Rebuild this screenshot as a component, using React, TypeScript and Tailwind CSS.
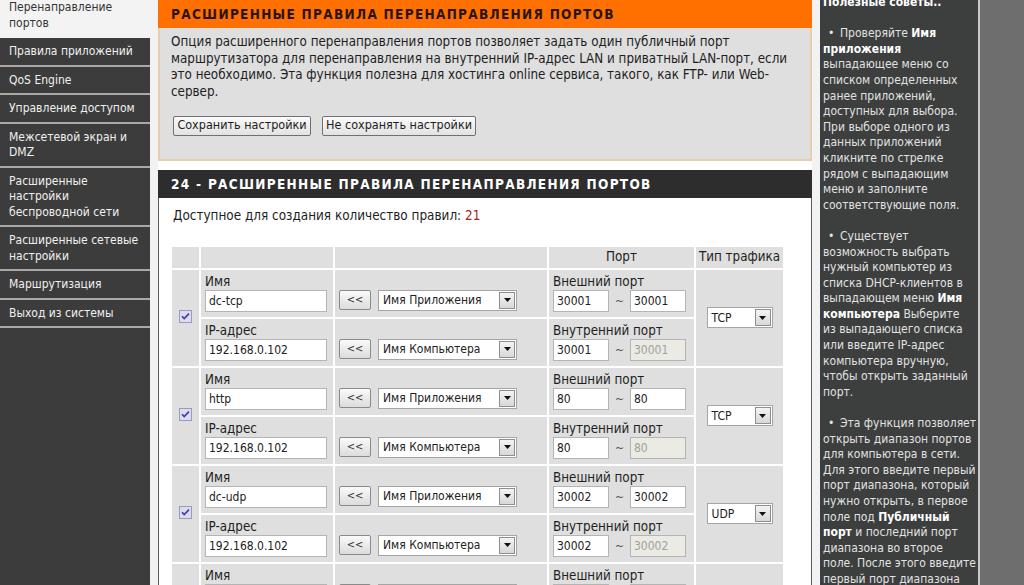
import React from 'react';

const SANS = "font-['DejaVu_Sans_Condensed','DejaVu_Sans',sans-serif]";

const menu: { lines: string[]; active?: boolean }[] = [
  { lines: ['Перенаправление', 'портов'], active: true },
  { lines: ['Правила приложений'] },
  { lines: ['QoS Engine'] },
  { lines: ['Управление доступом'] },
  { lines: ['Межсетевой экран и', 'DMZ'] },
  { lines: ['Расширенные', 'настройки', 'беспроводной сети'] },
  { lines: ['Расширенные сетевые', 'настройки'] },
  { lines: ['Маршрутизация'] },
  { lines: ['Выход из системы'] },
];

const tips: string[][] = [
  ['**Полезные советы..**'],
  [
    '• Проверяйте **Имя**',
    '**приложения**',
    'выпадающее меню со',
    'списком определенных',
    'ранее приложений,',
    'доступных для выбора.',
    'При выборе одного из',
    'данных приложений',
    'кликните по стрелке',
    'рядом с выпадающим',
    'меню и заполните',
    'соответствующие поля.',
  ],
  [
    '• Существует',
    'возможность выбрать',
    'нужный компьютер из',
    'списка DHCP-клиентов в',
    'выпадающем меню **Имя**',
    '**компьютера** Выберите',
    'из выпадающего списка',
    'или введите IP-адрес',
    'компьютера вручную,',
    'чтобы открыть заданный',
    'порт.',
  ],
  [
    '• Эта функция позволяет',
    'открыть диапазон портов',
    'для компьютера в сети.',
    'Для этого введите первый',
    'порт диапазона, который',
    'нужно открыть, в первое',
    'поле под **Публичный**',
    '**порт** и последний порт',
    'диапазона во второе',
    'поле. После этого введите',
    'первый порт диапазона',
  ],
];

const rules = [
  { name: 'dc-tcp', ip: '192.168.0.102', ext1: '30001', ext2: '30001', int1: '30001', int2: '30001', proto: 'TCP', on: true },
  { name: 'http', ip: '192.168.0.102', ext1: '80', ext2: '80', int1: '80', int2: '80', proto: 'TCP', on: true },
  { name: 'dc-udp', ip: '192.168.0.102', ext1: '30002', ext2: '30002', int1: '30002', int2: '30002', proto: 'UDP', on: true },
  { name: '', ip: '', ext1: '', ext2: '', int1: '', int2: '', proto: 'TCP', on: false },
];

function TipLine({ text }: { text: string }) {
  const parts = text.split('**');
  const bullet = parts[0].startsWith('• ');
  if (bullet) parts[0] = parts[0].slice(2);
  return (
    <div className="whitespace-nowrap">
      {bullet && <span className="inline-block w-[17px] pl-[5px]">•</span>}
      {parts.map((p, i) =>
        i % 2 === 1 ? (
          <b key={i} className="text-white">{p}</b>
        ) : (
          <span key={i}>{p}</span>
        )
      )}
    </div>
  );
}

function Arrow() {
  return (
    <span className="flex h-[17px] w-[16px] items-center justify-center border border-[#8e8e8e] bg-gradient-to-b from-[#f4f4f4] to-[#d8d8d8]">
      <svg width="7" height="4" viewBox="0 0 7 4">
        <path d="M0 0h7L3.5 4z" fill="#111" />
      </svg>
    </span>
  );
}

function Select({ label, w }: { label: string; w: string }) {
  return (
    <div className={`${w} flex h-[21px] items-center justify-between border border-[#a5a5a5] bg-white pl-[4px] pr-[1px] text-[12px] text-[#222]`}>
      <span className="whitespace-nowrap">{label}</span>
      <Arrow />
    </div>
  );
}

function Field({ value, w, disabled }: { value: string; w: string; disabled?: boolean }) {
  return (
    <input
      readOnly
      value={value}
      className={`${w} h-[22px] border border-[#b4b4b4] px-[3px] text-[12px] outline-none ${
        disabled ? 'bg-[#ebebe4] text-[#a0a0a0]' : 'bg-white text-[#222]'
      }`}
    />
  );
}

function BackBtn() {
  return (
    <span className="flex h-[20px] w-[32px] items-center justify-center rounded-[2px] border border-[#8a8a8a] bg-gradient-to-b from-[#fafafa] to-[#dcdcdc] text-[11px] text-[#333]">
      &lt;&lt;
    </span>
  );
}

function Check({ on }: { on: boolean }) {
  return (
    <svg width="13" height="13" viewBox="0 0 13 13">
      <rect x="0.5" y="0.5" width="12" height="12" fill="#dcdcee" stroke="#9a9ac0" />
      {on && <path d="M3 6.2l2.2 2.4L10 3.6" fill="none" stroke="#3c3ca8" strokeWidth="1.6" />}
    </svg>
  );
}

const cell = 'bg-[#dfdfdf] p-0';

function RuleRows({ r }: { r: (typeof rules)[number] }) {
  return (
    <>
      <tr>
        <td rowSpan={2} className={`${cell} text-center align-middle`}>
          <span className="inline-flex pt-[3px]">
            <Check on={r.on} />
          </span>
        </td>
        <td className={`${cell} h-[47px] px-[4px] pt-[3px] align-top`}>
          <div className="h-[17px] leading-[17px]">Имя</div>
          <Field value={r.name} w="w-[122px]" />
        </td>
        <td className={`${cell} px-[4px] pb-[6px] align-bottom`}>
          <div className="flex items-center gap-[7px]">
            <BackBtn />
            <Select label="Имя Приложения" w="w-[139px]" />
          </div>
        </td>
        <td className={`${cell} px-[4px] pt-[3px] align-top`}>
          <div className="h-[17px] whitespace-nowrap leading-[17px]">Внешний порт</div>
          <div className="flex items-center">
            <Field value={r.ext1} w="w-[56px]" />
            <span className="w-[21px] text-center text-[12px] text-[#555]">~</span>
            <Field value={r.ext2} w="w-[56px]" />
          </div>
        </td>
        <td rowSpan={2} className={`${cell} text-center align-middle`}>
          <div className="flex justify-center">
            <Select label={r.proto} w="w-[66px]" />
          </div>
        </td>
      </tr>
      <tr>
        <td className={`${cell} h-[47px] px-[4px] pt-[3px] align-top`}>
          <div className="h-[17px] leading-[17px]">IP-адрес</div>
          <Field value={r.ip} w="w-[122px]" />
        </td>
        <td className={`${cell} px-[4px] pb-[6px] align-bottom`}>
          <div className="flex items-center gap-[7px]">
            <BackBtn />
            <Select label="Имя Компьютера" w="w-[139px]" />
          </div>
        </td>
        <td className={`${cell} px-[4px] pt-[3px] align-top`}>
          <div className="h-[17px] whitespace-nowrap leading-[17px]">Внутренний порт</div>
          <div className="flex items-center">
            <Field value={r.int1} w="w-[56px]" />
            <span className="w-[21px] text-center text-[12px] text-[#555]">~</span>
            <Field value={r.int2} w="w-[56px]" disabled />
          </div>
        </td>
      </tr>
    </>
  );
}

export default function App() {
  return (
    <div className={`${SANS} flex h-[585px] w-[1024px] overflow-hidden bg-white text-[13px] text-[#1e1e1e]`}>
      {/* левое меню */}
      <div className="w-[150px] shrink-0 bg-[#3c3c3c] text-[12px] leading-[15.5px]">
        {menu.map((m, i) => (
          <div
            key={i}
            className={
              m.active
                ? 'bg-[#f3f3f3] pb-[7px] pl-[9px] text-[#333]'
                : 'border-b-2 border-[#a9a9a9] pb-[5px] pl-[9px] pt-[6px] text-[#f0f0f0]'
            }
          >
            {m.lines.map((l) => (
              <div key={l} className="whitespace-nowrap">{l}</div>
            ))}
          </div>
        ))}
      </div>

      <div className="w-[8px] shrink-0 bg-[#f2f2f2]" />

      {/* основная часть */}
      <div className="flex min-h-0 w-[654px] shrink-0 flex-col">
        <div className="flex h-[28px] shrink-0 items-center bg-[#ff7000] px-[13px]">
          <span className="whitespace-nowrap text-[13.5px] font-bold tracking-[1.3px] text-[#2a1406]">
            РАСШИРЕННЫЕ ПРАВИЛА ПЕРЕНАПРАВЛЕНИЯ ПОРТОВ
          </span>
        </div>
        <div className="shrink-0 border-x-2 border-b-2 border-[#e7cfae] bg-[#dfdfdf] px-[11px] pb-[23px] pt-[6px]">
          <div className="text-[13.3px] leading-[16.7px]">
            <div className="whitespace-nowrap">Опция расширенного перенаправления портов позволяет задать один публичный порт</div>
            <div className="whitespace-nowrap">маршрутизатора для перенаправления на внутренний IP-адрес LAN и приватный LAN-порт, если</div>
            <div className="whitespace-nowrap">это необходимо. Эта функция полезна для хостинга online сервиса, такого, как FTP- или Web-</div>
            <div className="whitespace-nowrap">сервер.</div>
          </div>
          <div className="mt-[15px] flex gap-[11px] pl-[2px]">
            <span className="flex h-[20px] w-[138px] items-center justify-center rounded-[2px] border border-[#707070] bg-gradient-to-b from-[#fbfbfb] to-[#e2e2e2] text-[12.5px]">
              Сохранить настройки
            </span>
            <span className="flex h-[20px] w-[154px] items-center justify-center rounded-[2px] border border-[#707070] bg-gradient-to-b from-[#fbfbfb] to-[#e2e2e2] text-[12.5px]">
              Не сохранять настройки
            </span>
          </div>
        </div>

        <div className="h-[9px] shrink-0" />

        <div className="flex h-[28px] shrink-0 items-center bg-[#2d2d2d] px-[13px]">
          <span className="whitespace-nowrap text-[13.5px] font-bold tracking-[1.3px] text-white">
            24 - РАСШИРЕННЫЕ ПРАВИЛА ПЕРЕНАПРАВЛЕНИЯ ПОРТОВ
          </span>
        </div>
        <div className="min-h-0 flex-1 border-x border-[#5a5a5a] bg-white pl-[11px]">
          <div className="pl-[3px] pt-[10px] text-[13.4px] leading-[16px]">
            Доступное для создания количество правил: <span className="text-[#a5261f]">21</span>
          </div>
          <table className="mt-[21px] w-[615px] table-fixed border-separate border-spacing-[2px] text-[13.3px]">
            <colgroup>
              <col className="w-[27px]" />
              <col className="w-[132px]" />
              <col className="w-[212px]" />
              <col className="w-[145px]" />
              <col className="w-[87px]" />
            </colgroup>
            <thead>
              <tr>
                <th className={`${cell} h-[21px]`} />
                <th className={cell} />
                <th className={cell} />
                <th className={`${cell} font-normal`}>Порт</th>
                <th className={`${cell} whitespace-nowrap font-normal`}>Тип трафика</th>
              </tr>
            </thead>
            <tbody>
              {rules.map((r, i) => (
                <RuleRows key={i} r={r} />
              ))}
            </tbody>
          </table>
        </div>
      </div>

      <div className="w-[8px] shrink-0 bg-[#f2f2f2]" />

      {/* полезные советы */}
      <div className="w-[158px] shrink-0 bg-[#3d3e3e] pl-[3px] text-[12px] leading-[15.6px] text-[#e2e2e2]">
        <div className="-mt-[5px]">
          {tips.map((p, i) => (
            <div key={i} className={i > 0 ? 'mt-[15.6px]' : ''}>
              {p.map((l, j) => (
                <TipLine key={j} text={l} />
              ))}
            </div>
          ))}
        </div>
      </div>
      <div className="w-[2px] shrink-0 bg-[#c9c9c9]" />
      <div className="flex-1 bg-[#6e6e6e]" />
    </div>
  );
}
